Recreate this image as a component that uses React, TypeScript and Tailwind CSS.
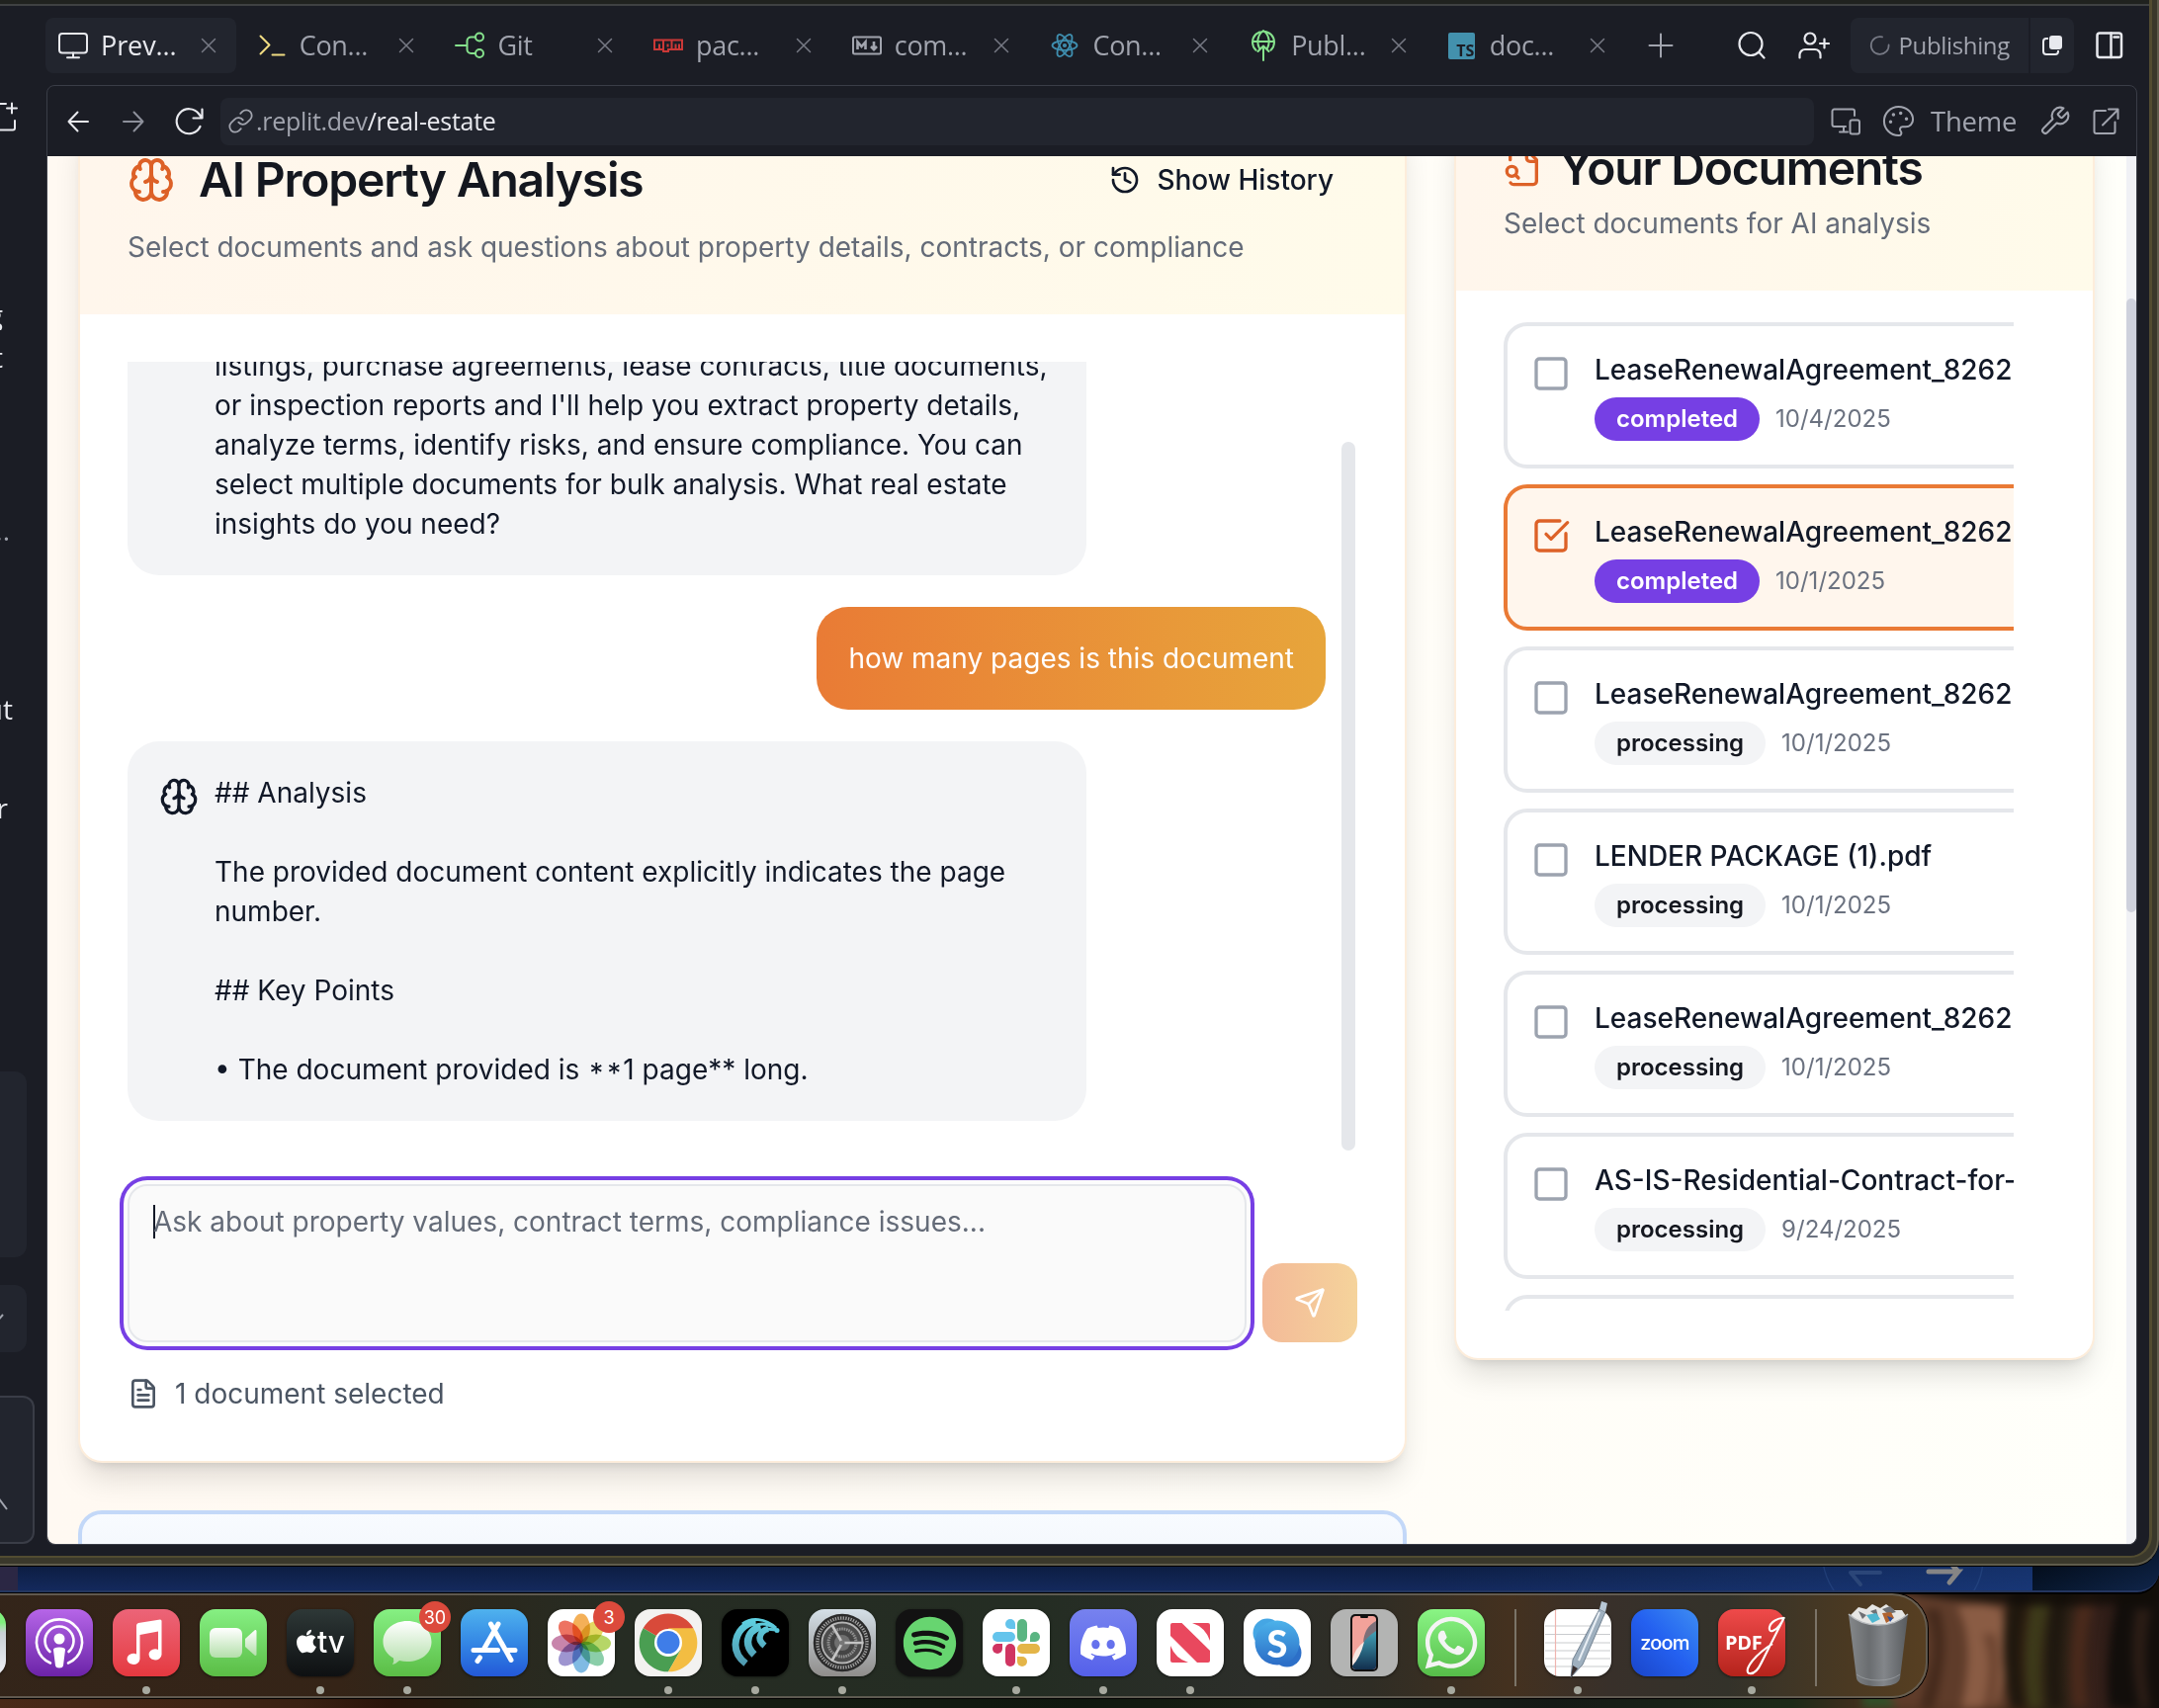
import React from "react";
import {
  Brain,
  History,
  FileText,
  Send,
  Square,
  SquareCheckBig,
  Palette,
} from "lucide-react";
import { FaApple, FaDiscord, FaSpotify, FaWhatsapp } from "react-icons/fa6";

const inter = "font-['Inter',sans-serif]";
const chrome = "font-['Open_Sans','Noto_Sans',sans-serif]";

type IconProps = { className?: string; children?: React.ReactNode; sw?: number };

function Line({ className = "", children, sw = 2 }: IconProps) {
  return (
    <svg
      viewBox="0 0 32 32"
      className={`h-8 w-8 shrink-0 ${className}`}
      fill="none"
      stroke="currentColor"
      strokeWidth={sw}
      strokeLinecap="round"
      strokeLinejoin="round"
    >
      {children}
    </svg>
  );
}

const MonitorIcon = () => (
  <Line className="text-[#e8e9ee]">
    <rect x="2" y="4" width="28" height="19.5" rx="3" />
    <path d="M16 23.5V28M10 28.2h12" />
  </Line>
);
const ShellIcon = () => (
  <Line className="text-[#f0dc82]">
    <path d="M4.500 6.500l9 9-9 9M16.500 25.500h12" />
  </Line>
);
const GitIcon = () => (
  <Line className="text-[#86e28d]">
    <circle cx="26" cy="7.500" r="4" />
    <circle cx="26" cy="24" r="4" />
    <path d="M2 16h11.500M22 7.500h-4.500a4 4 0 0 0-4 4v8.500a4 4 0 0 0 4 4H22" />
  </Line>
);
const NpmIcon = () => (
  <svg viewBox="0 0 32 32" className="h-8 w-8 shrink-0" fill="none" stroke="#cb3837" strokeWidth="2">
    <path d="M2 10.500h28v9.500H16v2h-5v-2H2z" />
    <path d="M7 20v-5.500M11 10.500V20M15.500 14.500v3M19.500 10.500V20M23.500 20v-5.500M27 20v-5.500" />
  </svg>
);
const MarkdownIcon = () => (
  <Line className="text-[#a1a4ae]">
    <rect x="2" y="7.500" width="28" height="17" rx="1.500" />
    <path d="M6.500 20v-7.500l4 4.500 4-4.500V20M23 12v7M20 17l3 3.200 3-3.200" strokeWidth="2.600" strokeLinecap="butt" strokeLinejoin="miter" />
  </Line>
);
const ReactIcon = () => (
  <Line className="text-[#3f8fb0]" sw={1.800}>
    <ellipse cx="16" cy="16" rx="12.500" ry="4.800" />
    <ellipse cx="16" cy="16" rx="12.500" ry="4.800" transform="rotate(60 16 16)" />
    <ellipse cx="16" cy="16" rx="12.500" ry="4.800" transform="rotate(120 16 16)" />
    <circle cx="16" cy="16" r="1.200" />
  </Line>
);
const PublishIcon = () => (
  <Line className="overflow-visible text-[#86e28d]">
    <path d="M8.500 20.800A11 11 0 1 1 23.500 20.800M5 12h22M12 19c-3-6-2-14 4-18 6 4 7 12 4 18M16 31V17M10.500 22l5.500-5.500 5.500 5.500" />
  </Line>
);
const TsIcon = () => (
  <span className="flex h-[27px] w-[27px] shrink-0 items-end justify-end rounded-[2px] bg-[#4391ad] pr-[1px] text-[16px] leading-[18px] font-bold text-[#1b1d25]">
    TS
  </span>
);

const tabs = [
  { label: "Prev...", icon: <MonitorIcon />, active: true },
  { label: "Con...", icon: <ShellIcon /> },
  { label: "Git", icon: <GitIcon /> },
  { label: "pac...", icon: <NpmIcon /> },
  { label: "com...", icon: <MarkdownIcon /> },
  { label: "Con...", icon: <ReactIcon /> },
  { label: "Publ...", icon: <PublishIcon /> },
  { label: "doc...", icon: <TsIcon /> },
];

function TabBar() {
  return (
    <div className={`flex h-[68px] items-start pt-3 ${chrome}`}>
      <div className="-ml-px flex gap-2">
        {tabs.map((t, i) => (
          <div
            key={i}
            className={`flex h-14 w-[192.700px] items-center rounded-lg pr-5 pl-3 ${t.active ? "bg-[#22252e]" : ""}`}
          >
            <span className="flex w-8 justify-center">{t.icon}</span>
            <span
              className={`ml-3 text-[27px] whitespace-nowrap ${t.active ? "tracking-[-0.100px] font-medium text-[#e8e9ee]" : "tracking-[-0.300px] text-[#a1a4ae]"}`}
            >
              {t.label}
            </span>
            <svg viewBox="0 0 16 16" className="ml-auto h-4 w-4" stroke="#777a85" strokeWidth="1.500" strokeLinecap="round">
              <path d="M1.500 1.500l13 13M14.500 1.500l-13 13" />
            </svg>
          </div>
        ))}
      </div>
      <div className="flex h-14 flex-1 items-center">
        <Line className="ml-[20px] text-[#a1a4ae]">
          <path d="M16 4.500v23M4.500 16h23" />
        </Line>
        <Line className="ml-[60px] text-[#e8e9ee]" sw={2.200}>
          <circle cx="15" cy="14.500" r="11.500" />
          <path d="M23.500 23l5 5.500" />
        </Line>
        <Line className="ml-[31px] text-[#e8e9ee]" sw={2.200}>
          <circle cx="12" cy="9" r="5.500" />
          <path d="M1.500 28.500v-3a5.500 5.500 0 0 1 5.500-5.500h10a5.500 5.500 0 0 1 5.500 5.500v3M26.500 9.500v9M22 14h9" />
        </Line>
        <div className="ml-[21px] flex gap-[2px]">
          <div className="flex h-14 w-[180px] items-center rounded-l-lg bg-[#22252e] pl-[19px]">
            <Line className="h-[22px] w-[22px] text-[#777a85]" sw={2.500}>
              <path d="M19 3.500A13 13 0 1 0 28.500 15" />
            </Line>
            <span className="ml-[8px] text-[24px] tracking-[-0.350px] text-[#a1a4ae]">Publishing</span>
          </div>
          <div className="flex h-14 w-[44px] items-center justify-center rounded-r-lg bg-[#22252e]">
            <svg viewBox="0 0 20 20" className="h-[20px] w-[20px]" fill="none" stroke="#e8e9ee" strokeWidth="2">
              <path d="M6 3H4a3 3 0 0 0-3 3v10a3 3 0 0 0 3 3h9a3 3 0 0 0 3-3v-1" />
              <rect x="8" y="1" width="11" height="12" rx="2" fill="#e8e9ee" />
            </svg>
          </div>
        </div>
        <Line className="ml-5 text-[#e8e9ee]" sw={2.500}>
          <rect x="3.500" y="3.500" width="24.500" height="24.500" rx="2.500" />
          <path d="M17.500 3.500V28M20.500 7.500h4.500" />
        </Line>
      </div>
    </div>
  );
}

function AddressBar() {
  return (
    <div className={`flex h-[71px] items-center pl-[15px] ${chrome}`}>
      <Line className="text-[#e8e9ee]">
        <path d="M26 16H6.500M15.500 6.500L6.500 16l9 9.500" />
      </Line>
      <Line className="ml-6 text-[#8d909b]">
        <path d="M6 16h19.500M16.500 6.500l9 9.500-9 9.500" />
      </Line>
      <Line className="ml-6 text-[#e8e9ee]" sw={2.200}>
        <path d="M27.500 21A12.500 12.500 0 1 1 26 8l3 4M29.500 3.500V12.500H20.500" />
      </Line>
      <div className="ml-4 flex h-12 w-[1612px] items-center rounded-lg bg-[#22252e] pl-[7px]">
        <svg viewBox="0 0 24 24" className="h-[27px] w-[27px]" fill="none" stroke="#a1a4ae" strokeWidth="1.600" strokeLinecap="round" strokeLinejoin="round">
          <path d="M10 13a5 5 0 0 0 7.540.540l3-3a5 5 0 0 0-7.070-7.070l-1.720 1.710" />
          <path d="M14 11a5 5 0 0 0-7.540-.540l-3 3a5 5 0 0 0 7.070 7.070l1.710-1.710" />
        </svg>
        <span className="ml-[2px] text-[25px] tracking-[-0.300px] text-[#a1a4ae]">
          .replit.dev<span className="font-medium text-[#e8e9ee]">/real-estate</span>
        </span>
      </div>
      <div className="ml-4 flex items-center text-[#a1a4ae]">
        <Line>
          <path d="M18 26.500h-8M14 21v5M16 21H4.500a2 2 0 0 1-2-2V5.500a2 2 0 0 1 2-2h18.500a2 2 0 0 1 2 2V10" />
          <rect x="20.500" y="14.500" width="9.500" height="14" rx="2" />
        </Line>
        <Palette className="ml-[20px] h-[35px] w-[35px]" strokeWidth={1.400} />
        <span className="ml-[15px] w-[88px] text-[27.500px] tracking-[-0.200px]">Theme</span>
        <svg viewBox="0 0 24 24" className="ml-[21px] h-[33px] w-[33px]" fill="none" stroke="currentColor" strokeWidth="1.500" strokeLinecap="round" strokeLinejoin="round">
          <path d="M14.700 6.300a1 1 0 0 0 0 1.400l1.600 1.600a1 1 0 0 0 1.400 0l3.770-3.770a6 6 0 0 1-7.940 7.940l-6.910 6.910a2.120 2.120 0 0 1-3-3l6.910-6.910a6 6 0 0 1 7.940-7.940l-3.760 3.760z" />
        </svg>
        <Line className="ml-[19px]">
          <path d="M16 5H6.500a2 2 0 0 0-2 2v19a2 2 0 0 0 2 2h17a2 2 0 0 0 2-2V16.500M13 19.500L28 4.500M19 3.500h9.500V13" />
        </Line>
      </div>
    </div>
  );
}

function Sidebar() {
  return (
    <div className={`flex w-[47px] shrink-0 flex-col text-[28px] leading-8 text-[#e8e9ee] ${chrome}`}>
      <Line className="mt-[96px] -ml-[14px]">
        <path d="M20 3H4M29 20v7.500a2 2 0 0 1-2 2H4M26 2.500v10M21 7.500h10" />
      </Line>
      <div className="mt-[168px] flex w-[3px] justify-end overflow-hidden"><span>g</span></div>
      <div className="mt-[11px] flex w-[3px] justify-end overflow-hidden"><span>t</span></div>
      <div className="mt-[143px] flex w-[10px] justify-end overflow-hidden text-[#a1a4ae]"><span>...</span></div>
      <div className="mt-[149px] flex w-[13px] justify-end overflow-hidden"><span>out</span></div>
      <div className="mt-[68px] flex w-[8px] justify-end overflow-hidden"><span>or</span></div>
      <div className="mt-[251px] h-[188px] w-[27px] shrink-0 rounded-r-xl bg-[#22252e]" />
      <div className="mt-7 flex h-[68px] w-[27px] shrink-0 items-center rounded-r-xl bg-[#22252e]">
        <svg viewBox="0 0 14 12" className="-ml-[10px] h-3 w-[14px]" fill="none" stroke="#a1a4ae" strokeWidth="2">
          <path d="M1 2l6 7 6-7" />
        </svg>
      </div>
      <div className="mt-[44px] flex h-[150px] w-[35px] shrink-0 items-end rounded-r-xl border-2 border-l-0 border-[#3a3d47] bg-[#22252e] pb-[32px]">
        <svg viewBox="0 0 20 14" className="-ml-[12px] h-[14px] w-5" fill="none" stroke="#a1a4ae" strokeWidth="2">
          <path d="M1 1L10 1l9 12" />
        </svg>
      </div>
    </div>
  );
}

function AssistantBubble({ children, clipped = false }: { children: React.ReactNode; clipped?: boolean }) {
  return (
    <div className={`flex w-[970px] shrink-0 gap-4 rounded-[32px] bg-[#f3f4f6] p-8 ${clipped ? "-mt-[88px]" : ""}`}>
      <Brain className="mt-1 h-10 w-10 shrink-0 text-[#111827]" strokeWidth={2} />
      <div className="text-[28px] leading-10 whitespace-pre text-[#111827]">{children}</div>
    </div>
  );
}

function ChatCard() {
  return (
    <section className="flex h-[1364px] w-[1344px] shrink-0 flex-col overflow-hidden rounded-3xl border-2 border-[#fdeddb] bg-white shadow-[0_20px_30px_-6px_rgba(0,0,0,0.13),0_8px_12px_-8px_rgba(0,0,0,0.150)]">
      <header className="flex h-[200px] flex-col justify-end bg-linear-to-r from-[#fff6ec] to-[#fffbea] px-12 pb-12">
        <div className="flex items-center text-[#111827]">
          <Brain className="h-12 w-12 text-[#dd6127]" strokeWidth={2} />
          <h2 className="ml-6 text-[48px] leading-[48px] font-semibold tracking-[-1.200px] text-[#14171f]">AI Property Analysis</h2>
          <button className="mr-6 ml-auto flex items-center gap-4 text-[28px] leading-10 font-medium">
            <History className="h-8 w-8" strokeWidth={2} />
            Show History
          </button>
        </div>
        <p className="mt-6 text-[28px] leading-10 text-[#646b78]">
          Select documents and ask questions about property details, contracts, or compliance
        </p>
      </header>
      <div className="flex flex-1 flex-col px-12 pt-12">
        <div className="flex h-[800px] justify-between overflow-hidden">
          <div className="flex w-[1212px] flex-col gap-8">
            <AssistantBubble clipped>
              {"\nlistings, purchase agreements, lease contracts, title documents,\nor inspection reports and I'll help you extract property details,\nanalyze terms, identify risks, and ensure compliance. You can\nselect multiple documents for bulk analysis. What real estate\ninsights do you need?"}
            </AssistantBubble>
            <div className="self-end rounded-[32px] bg-linear-to-r from-[#e97b35] to-[#e7a53b] p-8 text-[28px] leading-10 text-white">
              how many pages is this document
            </div>
            <AssistantBubble>
              {"## Analysis\n\nThe provided document content explicitly indicates the page\nnumber.\n\n## Key Points\n\n• The document provided is "}
              <span className="relative top-1 left-[2px] tracking-[4px]">**</span>
              {"1 page** long."}
            </AssistantBubble>
          </div>
          <div className="mt-[81px] mr-[2px] h-[717px] w-[14px] rounded-full bg-[#e5e7eb]" />
        </div>
        <div className="mt-8 flex items-end gap-4">
          <div className="flex h-[160px] w-[1132px] items-start rounded-[20px] border-2 border-[#e5e7eb] bg-[#fafafa] px-6 py-4 text-[28px] leading-10 text-[#646b78] ring-4 ring-[#763fe4] ring-offset-4 ring-offset-[#fcfcfc]">
            <span className="mt-[3px] -mr-[2px] h-[34px] w-[2px] bg-[#111827]" />
            Ask about property values, contract terms, compliance issues...
          </div>
          <button className="flex h-20 w-24 items-center justify-center rounded-[20px] bg-linear-to-r from-[#f3ba98] to-[#f5d39b] text-white">
            <Send className="h-8 w-8" strokeWidth={2} />
          </button>
        </div>
        <div className="mt-8 flex items-center gap-4 text-[28px] leading-10 text-[#4b5563]">
          <FileText className="h-8 w-8" strokeWidth={2} />
          1 document selected
        </div>
      </div>
    </section>
  );
}

const docs = [
  { name: "LeaseRenewalAgreement_8262", status: "completed", date: "10/4/2025" },
  { name: "LeaseRenewalAgreement_8262", status: "completed", date: "10/1/2025", selected: true },
  { name: "LeaseRenewalAgreement_8262", status: "processing", date: "10/1/2025" },
  { name: "LENDER PACKAGE (1).pdf", status: "processing", date: "10/1/2025" },
  { name: "LeaseRenewalAgreement_8262", status: "processing", date: "10/1/2025" },
  { name: "AS-IS-Residential-Contract-for-", status: "processing", date: "9/24/2025" },
  { name: "", status: "", date: "" },
];

function DocumentsCard() {
  return (
    <section className="flex h-[1260px] w-[648px] shrink-0 flex-col overflow-hidden rounded-3xl border-2 border-[#fdeddb] bg-white shadow-[0_20px_30px_-6px_rgba(0,0,0,0.13),0_8px_12px_-8px_rgba(0,0,0,0.150)]">
      <header className="flex h-[176px] flex-col justify-end bg-linear-to-r from-[#fff6ec] to-[#fffbea] px-12 pb-12">
        <div className="flex items-center gap-4">
          <svg viewBox="0 0 24 24" className="h-10 w-10 text-[#dd6127]" fill="none" stroke="currentColor" strokeWidth="2" strokeLinecap="round" strokeLinejoin="round">
            <path d="M14 2v4a2 2 0 0 0 2 2h4" />
            <path d="M4.268 21a2 2 0 0 0 1.727 1H18a2 2 0 0 0 2-2V7l-5-5H6a2 2 0 0 0-2 2v3" />
            <path d="m9 18-1.500-1.500" />
            <circle cx="5" cy="14" r="3" />
          </svg>
          <h2 className="text-[48px] leading-[48px] font-semibold tracking-[-1.200px] text-[#14171f]">Your Documents</h2>
        </div>
        <p className="mt-3 text-[28px] leading-10 text-[#646b78]">Select documents for AI analysis</p>
      </header>
      <div className="mt-8 ml-12 flex h-[1000px] w-[516px] flex-col gap-4 overflow-hidden">
        {docs.map((d, i) => (
          <div
            key={i}
            className={`flex h-[148px] w-[560px] shrink-0 gap-6 rounded-3xl border-4 p-6 ${d.selected ? "border-[#ea7a35] bg-[#fff6ed]" : "border-[#e5e7eb]"}`}
          >
            {d.name && (
              <>
                {d.selected ? (
                  <SquareCheckBig className="mt-1 h-10 w-10 shrink-0 text-[#dd6127]" strokeWidth={2} />
                ) : (
                  <Square className="mt-1 h-10 w-10 shrink-0 text-[#9ca3af]" strokeWidth={2} />
                )}
                <div className="flex flex-col gap-2 whitespace-nowrap">
                  <div className="text-[28px] leading-10 font-medium text-[#111827]">{d.name}</div>
                  <div className="flex items-center gap-4">
                    <span
                      className={`flex h-11 items-center rounded-full px-[22px] text-[24px] font-semibold ${d.status === "completed" ? "bg-[#763fe4] text-white" : "bg-[#f3f4f6] text-[#14171f]"}`}
                    >
                      {d.status}
                    </span>
                    <span className="text-[24px] text-[#6b7280]">{d.date}</span>
                  </div>
                </div>
              </>
            )}
          </div>
        ))}
      </div>
    </section>
  );
}

function Page() {
  return (
    <div className={`flex flex-1 overflow-hidden rounded-b-lg bg-linear-to-r from-[#fff9f2] to-[#fffffa] ${inter}`}>
      <div className="-mt-[42px] ml-[31px] flex flex-col gap-12">
        <ChatCard />
        <div className="h-[200px] w-[1344px] shrink-0 rounded-3xl border-4 border-[#c3d8f8] bg-linear-to-b from-[#f8fbff] to-[#e6eaf2]" />
      </div>
      <div className="-mt-[42px] ml-12">
        <DocumentsCard />
      </div>
      <div className="ml-auto w-[10px] shrink-0 bg-[#f0f1f5] pt-[144px]">
        <div className="h-[621px] rounded-full bg-[#ced1dc]" />
      </div>
    </div>
  );
}

/* ---------- Dock ---------- */

function DockApp({ bg, dot, badge, children }: { bg: string; dot?: boolean; badge?: string; children?: React.ReactNode }) {
  return (
    <div
      className={`relative flex h-[68px] w-[68px] shrink-0 items-center justify-center rounded-[16px] shadow-[0_1px_3px_rgba(0,0,0,0.5)] ${bg}`}
    >
      {children}
      {badge && (
        <span className="absolute -top-2 -right-[10px] flex h-8 w-8 items-center justify-center rounded-full bg-[#dc4a3c] text-[18px] text-white">
          {badge}
        </span>
      )}
      {dot && <span className="absolute -bottom-[18px] h-2 w-2 rounded-full bg-[#a7a99f]" />}
    </div>
  );
}

const Svg = ({ children, className = "" }: { children: React.ReactNode; className?: string }) => (
  <svg viewBox="0 0 68 68" className={`h-[68px] w-[68px] ${className}`} fill="none">
    {children}
  </svg>
);

const petals = ["#f2a23a", "#dfd046", "#a9cf4c", "#77c69a", "#69aede", "#8d82c8", "#bf6f9c", "#ea5a46"];

function Dock() {
  const teeth = Array.from({ length: 60 }, (_, i) => i * 6);
  return (
    <div className="absolute top-[1612px] left-[-60px] flex h-[106px] w-[2010px] items-start rounded-[36px] border-2 border-[#6b675c]/80 bg-[linear-gradient(90deg,#33251a_0%,#352417_20%,#2b281d_27%,#262c23_34%,#242d23_55%,#2c2e2a_66%,#2f2d25_72%,#44311f_79%,#38302a_84%,#33322a_90%,#4a3922_96%,#573f22_100%)] pt-[14px] shadow-[0_0_0_1px_#000]">
      <div className="-ml-1 flex items-start gap-5">
        <DockApp bg="bg-linear-to-b from-[#7ff07c] from-20% via-[#c9d0d4] via-35% to-[#f2f2f7]" />
        <DockApp bg="bg-linear-to-b from-[#b665e8] to-[#6c22a8]">
          <Svg>
            <path d="M25 54.500A23 23 0 1 1 43 54.500" stroke="#fff" strokeWidth="2.600" strokeLinecap="round" />
            <path d="M24.500 43A14.500 14.500 0 1 1 43.500 43" stroke="#fff" strokeWidth="2.600" strokeLinecap="round" />
            <circle cx="34" cy="30" r="5.500" fill="#fff" />
            <path d="M28 41q0-2.500 6-2.500t6 2.500l-2 16q-.5 2.500-4 2.500t-4-2.500z" fill="#fff" />
          </Svg>
        </DockApp>
        <DockApp bg="bg-linear-to-b from-[#ec6478] to-[#e5383f]" dot>
          <Svg>
            <path d="M24 16.500q0-2 2-2.500L48 10.500q1.500 0 1.500 1.500v34a6.500 5.500 0 1 1-3.500-5V22.500L27.500 26v24.500a6.500 5.500 0 1 1-3.500-5z" fill="#fff" />
          </Svg>
        </DockApp>
        <DockApp bg="bg-linear-to-b from-[#86f083] to-[#5bbd45]">
          <Svg>
            <rect x="10" y="19" width="33" height="30" rx="6" fill="url(#cam)" />
            <path d="M46 30l10-9q1.500-.5 1.500 1.500v23q0 2-1.500 1.500l-10-9z" fill="url(#cam)" />
            <defs>
              <linearGradient id="cam" x1="0" y1="0" x2="0" y2="1">
                <stop stopColor="#fff" />
                <stop offset="1" stopColor="#b4dfab" />
              </linearGradient>
            </defs>
          </Svg>
        </DockApp>
        <DockApp bg="bg-linear-to-b from-[#2e3837] to-[#0e1012]" dot>
          <FaApple className="-mt-1 h-[27px] w-[22px] text-white" />
          <span className="-mt-[2px] text-[30px] leading-none font-medium text-white">tv</span>
        </DockApp>
        <DockApp bg="bg-linear-to-b from-[#86f083] to-[#5bbd45]" dot badge="30">
          <Svg>
            <path d="M34 12c14 0 24.500 9 24.500 21S48 53 34 53q-4 0-8-1-3 3-7 4 2-3 1-6.500C13 45.500 9.500 39.500 9.500 33 9.500 21 20 12 34 12z" fill="url(#cam)" />
          </Svg>
        </DockApp>
        <DockApp bg="bg-linear-to-b from-[#4fb2ee] to-[#2458d8]">
          <Svg>
            <g stroke="#fff" strokeWidth="5" strokeLinecap="round">
              <path d="M38 15L24 39.500M30.500 15l20.500 36.500M13 41.500h24.500M48 41.500h7M19.500 49l-2.500 3.500" />
            </g>
          </Svg>
        </DockApp>
        <DockApp bg="bg-white" badge="3">
          <Svg>
            {petals.map((c, i) => (
              <ellipse
                key={c}
                cx="34"
                cy="19.500"
                rx="9"
                ry="15"
                fill={c}
                opacity="0.850"
                className="mix-blend-multiply"
                transform={`rotate(${i * 45} 34 34.500)`}
              />
            ))}
          </Svg>
        </DockApp>
        <DockApp bg="bg-[#f3f2f0]" dot>
          <Svg>
            <path d="M34 34L8.600 19.300A29.300 29.300 0 0 1 59.400 19.300z" fill="#d84a3a" />
            <path d="M34 34h0L8.600 19.300A29.300 29.300 0 0 0 34 63.300L46.700 41z" fill="#4a9e52" />
            <path d="M34 63.300A29.300 29.300 0 0 0 59.400 19.300H34L46.700 41z" fill="#f3bd42" />
            <circle cx="34" cy="34" r="14" fill="#fff" />
            <circle cx="34" cy="33.500" r="11.500" fill="#3f7de8" />
          </Svg>
        </DockApp>
        <DockApp bg="bg-black" dot>
          <Svg>
            <g stroke="url(#wave)" fill="none">
              <path d="M55 20C38 6 15 14 14 36q0 11 10.500 19" strokeWidth="7" strokeDasharray="62 200" strokeDashoffset="-22" />
              <path d="M55 19C44 9 30 8 21 15" strokeWidth="3" />
              <path d="M55 20C42 13 27 20 26.500 33q0 7 6.500 13" strokeWidth="7.500" strokeDasharray="42 200" strokeDashoffset="-16" />
              <path d="M55 20C46 14 38 14 32 18" strokeWidth="3" />
              <path d="M55 21C48 17 39 22 38.500 29q0 4 5 8" strokeWidth="6.500" strokeDasharray="28 200" strokeDashoffset="-8" />
              <path d="M55 21l-10-1" strokeWidth="3" />
            </g>
            <circle cx="56" cy="21.500" r="2.500" fill="#55c8dc" />
            <defs>
              <linearGradient id="wave" gradientUnits="userSpaceOnUse" x1="34" y1="8" x2="34" y2="58">
                <stop stopColor="#5fd3e4" />
                <stop offset="1" stopColor="#4f97ad" />
              </linearGradient>
            </defs>
          </Svg>
        </DockApp>
        <DockApp bg="bg-linear-to-b from-[#d5e0e8] to-[#8f8d8b]" dot>
          <Svg>
            <circle cx="34" cy="34" r="28" fill="#a4a4a4" stroke="#2a2a2a" strokeWidth="2.500" />
            {teeth.map((a) => (
              <path key={a} d="M34 7v3.500" stroke="#2a2a2a" strokeWidth="1.300" transform={`rotate(${a} 34 34)`} />
            ))}
            <circle cx="34" cy="34" r="22" fill="#4c4c4c" stroke="#2c2c2c" strokeWidth="3" />
            <circle cx="34" cy="34" r="14" fill="#454545" stroke="#8f8f8f" strokeWidth="3" strokeDasharray="1.600 .8" />
            <circle cx="34" cy="34" r="8" fill="#6f6f6f" />
            <circle cx="34" cy="34" r="20.500" stroke="#b5b5b5" strokeWidth="1.800" />
            <path d="M34 34h21.500M34 34L23.300 15.500M34 34L23.300 52.500" stroke="#c4c4c4" strokeWidth="2.600" />
            <circle cx="34" cy="34" r="2.500" fill="#777" />
          </Svg>
        </DockApp>
        <DockApp bg="bg-[#121212]">
          <FaSpotify className="h-[55px] w-[55px] text-[#67d570]" />
        </DockApp>
        <DockApp bg="bg-white" dot>
          <Svg>
            <g fill="#64c4ec"><rect x="10" y="23" width="23" height="10" rx="5" /><path d="M33 20h-5a5 5 0 1 1 5-5z" /></g>
            <g fill="#5ab582"><rect x="35" y="10" width="10" height="23" rx="5" /><path d="M48 33v-5a5 5 0 1 1 5 5z" /></g>
            <g fill="#e4b548"><rect x="35" y="35" width="23" height="10" rx="5" /><path d="M35 48h5a5 5 0 1 1-5 5z" /></g>
            <g fill="#d03562"><rect x="23" y="35" width="10" height="23" rx="5" /><path d="M20 35v5a5 5 0 1 1-5-5z" /></g>
          </Svg>
        </DockApp>
        <DockApp bg="bg-linear-to-b from-[#7782ef] to-[#5560ea]" dot>
          <FaDiscord className="h-[50px] w-[50px] text-white" />
        </DockApp>
        <DockApp bg="bg-white" dot>
          <Svg>
            <rect x="14" y="14" width="40" height="40" rx="2" fill="#e9485e" />
            <path d="M25.500 14H36Q49 18 54 32v10z" fill="#fff" />
            <path d="M14 27v10q5 13 18 17h9z" fill="#fff" />
          </Svg>
        </DockApp>
        <DockApp bg="bg-white">
          <Svg>
            <circle cx="24" cy="24" r="14.500" fill="#45a6e4" />
            <circle cx="44" cy="44" r="14.500" fill="#2c6fc8" />
            <circle cx="34" cy="34" r="22.500" fill="url(#sky)" />
            <defs>
              <linearGradient id="sky" x1="0" y1="0" x2="0" y2="1">
                <stop stopColor="#4cb2ea" />
                <stop offset="1" stopColor="#2b6cc6" />
              </linearGradient>
            </defs>
          </Svg>
          <span className="absolute font-['Lato',sans-serif] text-[38px] leading-none font-black text-white">S</span>
        </DockApp>
        <DockApp bg="bg-[#b3b4b3]">
          <Svg>
            <rect x="20" y="5" width="28" height="58" rx="5" fill="#111" />
            <rect x="22" y="7" width="24" height="54" rx="3.500" fill="#f2a29a" />
            <path d="M46 12Q34 18 33 34l13-10z" fill="#7d6f78" />
            <path d="M46 22Q34 30 32 37q-3 12-10 20v.500q0 3.500 3.500 3.500h17q3.500 0 3.500-3.500z" fill="url(#ph)" />
            <path d="M22 57q8-8 12-24-9 6-12 18z" fill="#f6e6e2" />
            <rect x="30" y="6.500" width="8" height="2.500" rx="1.200" fill="#111" />
            <defs>
              <linearGradient id="ph" x1="0" y1="0" x2="0" y2="1">
                <stop stopColor="#43a3b8" />
                <stop offset="1" stopColor="#122f4e" />
              </linearGradient>
            </defs>
          </Svg>
        </DockApp>
        <DockApp bg="bg-linear-to-b from-[#8af585] to-[#56bd49]" dot>
          <FaWhatsapp className="h-[60px] w-[60px] text-[#f4f4f4]" />
        </DockApp>
      </div>
      <div className="ml-[30px] h-[78px] w-[2px] bg-[#7b7468]" />
      <div className="ml-[28px] flex gap-5">
        <DockApp bg="bg-white" dot>
          <Svg className="overflow-visible">
            <path d="M1 17h66M1 25.500h66M1 34h66M1 42h66M1 50h66M1 58h66" stroke="#c9cbce" strokeWidth="1.200" />
            <path d="M11.500 1v66" stroke="#efb5b0" strokeWidth="1.200" />
            <path d="M56 0l6 3L39 56l-12 13 2-18z" fill="#9fb0bf" stroke="#5e6f80" strokeWidth="0.800" />
            <path d="M56 0l2-8 6 2-2 9z" fill="#b7c6d4" />
            <path d="M27 69l2-12 5 3z" fill="#3a3030" />
            <path d="M56 3L35 52" stroke="#e8eef4" strokeWidth="2" />
          </Svg>
        </DockApp>
        <DockApp bg="bg-linear-to-tr from-[#1a45c8] via-[#2460f0] to-[#3f8cf2]">
          <span className="text-[20px] font-medium tracking-[-0.800px] text-white">zoom</span>
        </DockApp>
        <DockApp bg="bg-linear-to-b from-[#ef4a4a] to-[#b5231b]" dot>
          <span className="absolute left-[7px] font-['Open_Sans',sans-serif] text-[20px] font-bold tracking-[-0.300px] text-white">PDF</span>
          <Svg>
            <path d="M67 13c-6-1-14 4-15 10-1 7 6 4 10-2 3-4 5-9 5-9L44 61q-6 14-13 12-4-3 4-14 8-10 20-18" transform="translate(0 -3) scale(1 0.930)" stroke="#fff" strokeWidth="2.200" />
          </Svg>
        </DockApp>
      </div>
      <div className="ml-[30px] h-[78px] w-[2px] bg-[#7b7468]" />
      <svg viewBox="0 0 64 86" className="mt-[-6px] ml-[30px] h-[86px] w-[64px]" fill="none">
        <path d="M4 12l8-8 8 2 6-5 8 4 6-4 8 6 8 0 4 6-6 10H10z" fill="#e6e6e4" />
        <path d="M12 8l8 4-4 4zM36 6l8-3 6 6-8 2zM24 8l6-2 2 8z" fill="#6e7074" />
        <path d="M20 12l10-2 4 6-8 4z" fill="#4fb7d0" />
        <path d="M36 10l9-1 3 6-8 5z" fill="#b0632f" />
        <path d="M41 13l6 2-3 4z" fill="#2b4f9c" />
        <path d="M2 11Q14 22 32 22T62 11L54 76q-2 8-22 8t-22-8z" fill="url(#bin)" />
        <path d="M2 11Q14 22 32 22T62 11" stroke="#b9bcbf" strokeWidth="1.500" />
        <path d="M10 72q8 6 22 6t22-6" stroke="#a9adb0" strokeWidth="1" opacity=".6" />
        <defs>
          <linearGradient id="bin" x1="0" x2="1">
            <stop stopColor="#85888a" />
            <stop offset=".35" stopColor="#6a6d70" />
            <stop offset=".6" stopColor="#83868a" />
            <stop offset="1" stopColor="#585b5e" />
          </linearGradient>
        </defs>
      </svg>
    </div>
  );
}

function Wallpaper() {
  return (
    <div className="absolute inset-x-0 bottom-0 h-[160px] bg-[linear-gradient(90deg,#4a2a18_0%,#3a2012_14%,#2a140a_18%,#1c2414_25%,#161d12_33%,#10180f_50%,#1b2216_60%,#151a16_72%,#1d2a18_83%,#4b2f1e_87%,#5a3826_91%,#3a2414_93.500%,#2a2214_95%,#35201a_97%,#15100c_100%)]">
      <svg viewBox="0 0 300 130" preserveAspectRatio="none" className="absolute right-0 bottom-0 h-[130px] w-[300px] blur-[4px]">
        <path d="M40 0h120l-8 130H0Q60 90 40 0z" fill="#5f3c2a" />
        <path d="M95 28q20 30 5 102h34q22-50 6-100-20-8-45-2z" fill="#8a5c44" />
        <path d="M62 30q16 30 4 70l-8 30h14q18-60 6-100z" fill="#452a1c" />
        <path d="M122 55q12 30 0 75h10q10-40 2-75z" fill="#6c4430" />
        <path d="M150 10q-14 50-1 120h16q-11-70 6-120z" fill="#20180e" />
        <path d="M172 20q-12 50-4 110h14q-6-60 8-110z" fill="#3d3a1a" />
        <path d="M196 10q-12 50-6 120h12q-6-60 8-120z" fill="#1e170f" />
        <path d="M222 10q-16 50-10 120h16q-8-70 10-120z" fill="#4a2a1c" />
        <path d="M262 10q-18 60-12 120h50V0z" fill="#120e0b" />
        <path d="M276 30q-8 50 4 100h12q-10-50 0-100z" fill="#2a1c15" />
        <path d="M0 0h300v22Q180 34 60 16L0 0z" fill="#120d08" opacity=".85" />
        <path d="M0 108q24 0 34 22H0z" fill="#33502a" />
      </svg>
    </div>
  );
}

export default function App() {
  return (
    <div className={`relative h-[1728px] w-[2184px] overflow-hidden bg-black ${inter}`}>
      <Wallpaper />
      {/* window behind the editor */}
      <div className="absolute top-[1560px] left-[-40px] flex h-[51px] w-[2224px] overflow-hidden rounded-br-[22px] border-b-2 border-[#24365f] bg-linear-to-b from-[#06132a] to-[#14295c] shadow-[0_2px_0_#000]">
        <div className="h-full w-[58px] bg-[#2b2744]" />
        <div className="flex h-full w-[2038px] justify-end bg-linear-to-r from-transparent from-70% to-[#1b3f86]/60">
          <svg viewBox="0 0 220 51" className="h-[51px] w-[220px]" fill="none">
            <path d="M8 20Q12 50 40 70M170 20q-2 28-24 46" stroke="#3a5fa0" strokeOpacity=".3" strokeWidth="1.500" />
            <path d="M66 31H36M46 43L36 31" stroke="#2b4678" strokeWidth="4" strokeLinecap="round" />
            <path d="M115 30h30l-9 11M134 18l11 12" stroke="#858585" strokeWidth="5" strokeLinecap="round" />
          </svg>
        </div>
        <div className="h-full flex-1 bg-linear-to-br from-[#02070f] to-[#10254a]" />
      </div>
      <Dock />
      {/* editor window */}
      <div className="absolute top-0 left-0 h-[1584px] w-[2184px] overflow-hidden rounded-br-[26px] border-r-2 border-b-2 border-[#5f5c4c] bg-[#3a382b] pr-[5px] pb-[6px] shadow-[0_1px_0_#000]">
        <div className="flex h-full flex-col overflow-hidden rounded-br-[22px] border-r-3 border-b-2 border-[#524c31] bg-[#1b1d25]">
          <div className="h-[6px] shrink-0 border-b-2 border-[#3f4142] bg-[#20221f]" />
          <div className="flex flex-1">
            <Sidebar />
            <div className="flex w-[2127px] flex-col">
              <TabBar />
              <div className="mt-[12px] flex h-[1477px] w-[2115px] flex-col rounded-lg border border-[#3a3d47]">
                <AddressBar />
                <Page />
              </div>
            </div>
          </div>
        </div>
      </div>
    </div>
  );
}
